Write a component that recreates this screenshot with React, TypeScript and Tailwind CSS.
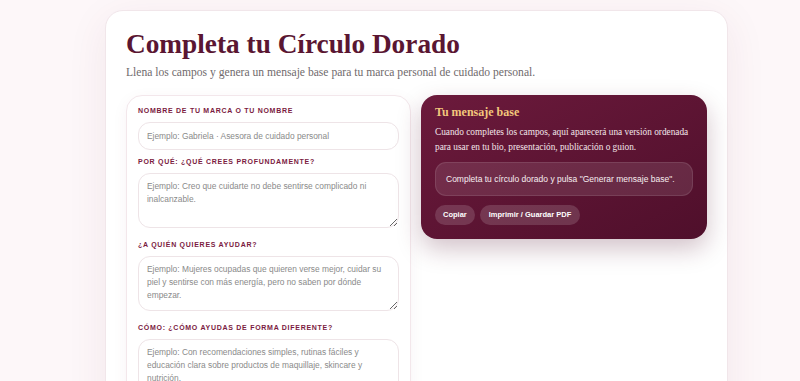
export default function App() {
    const serif = { fontFamily: '"Liberation Serif", "DejaVu Serif", serif' };

    const fields = [
        { label: 'Nombre de tu marca o tu nombre', placeholder: 'Ejemplo: Gabriela · Asesora de cuidado personal', area: false, mb: 'mb-[7px]' },
        { label: 'Por qué: ¿Qué crees profundamente?', placeholder: 'Ejemplo: Creo que cuidarte no debe sentirse complicado ni\ninalcanzable.', area: true, mb: 'mb-[12px]' },
        { label: '¿A quién quieres ayudar?', placeholder: 'Ejemplo: Mujeres ocupadas que quieren verse mejor, cuidar su\npiel y sentirse con más energía, pero no saben por dónde\nempezar.', area: true, mb: 'mb-[12px]' },
        { label: 'Cómo: ¿Cómo ayudas de forma diferente?', placeholder: 'Ejemplo: Con recomendaciones simples, rutinas fáciles y\neducación clara sobre productos de maquillaje, skincare y\nnutrición.', area: true, mb: 'mb-[12px]' },
    ];

    return (
        <div className="h-[381px] overflow-hidden bg-[#fdf7f9] pt-[10px]" style={{ fontFamily: '"Liberation Sans", Arial, sans-serif' }}>
            <div className="ml-[105px] w-[623px] rounded-[18px] bg-white border border-[#f1e6ea] shadow-[0_10px_40px_rgba(120,40,70,0.08)] px-[20px] pt-[16px] pb-6">
                <h1 className="text-[27.3px] leading-[34px] font-bold text-[#5a1632]" style={serif}>
                    Completa tu Círculo Dorado
                </h1>
                <p className="mt-[4px] text-[11.6px] leading-[16px] text-[#6f6a6c]" style={serif}>
                    Llena los campos y genera un mensaje base para tu marca personal de cuidado personal.
                </p>

                <div className="mt-[14px] flex gap-[10px] items-start">
                    {/* FORM */}
                    <div className="w-[286px] rounded-[16px] border border-[#f3e7eb] bg-white px-[11px] pt-[10px] pb-4 shadow-[0_4px_16px_rgba(120,40,70,0.05)]">
                        {fields.map(f => (
                            <div key={f.label} className={f.mb}>
                                <label className="block text-[7px] leading-[10px] font-bold uppercase tracking-[0.72px] text-[#7b1b3f] mb-[6px]">
                                    {f.label}
                                </label>
                                {f.area ? (
                                    <textarea
                                        className="block w-full h-[55px] rounded-[12px] border border-[#eee4e7] pl-[8px] pr-[2px] py-[6px] text-[8.4px] leading-[13px] text-[#333] placeholder:text-[#8a8a8a] outline-none resize-y"
                                        placeholder={f.placeholder}
                                    />
                                ) : (
                                    <input
                                        className="block w-full h-[28px] rounded-[12px] border border-[#eee4e7] px-[8px] text-[8.4px] text-[#333] placeholder:text-[#8a8a8a] outline-none"
                                        placeholder={f.placeholder}
                                    />
                                )}
                            </div>
                        ))}
                    </div>

                    {/* MESSAGE */}
                    <div className="w-[287px] rounded-[16px] bg-gradient-to-br from-[#6c1a3c] to-[#4f0f2b] px-[14px] pt-[9px] pb-[14px] shadow-[0_10px_24px_rgba(80,15,45,0.25)]">
                        <h2 className="text-[12px] leading-[16px] font-bold text-[#f2c77c]" style={serif}>Tu mensaje base</h2>
                        <p className="mt-[5px] text-[9.3px] leading-[15px] text-[#f3e6ea]" style={serif}>
                            Cuando completes los campos, aquí aparecerá una versión ordenada para usar en tu bio, presentación, publicación o guion.
                        </p>
                        <div className="mt-[7px] h-[34px] flex items-center rounded-[11px] bg-white/10 border border-white/10 px-[10px] text-[8.5px] text-[#f7eef1]">
                            Completa tu círculo dorado y pulsa "Generar mensaje base".
                        </div>
                        <div className="mt-[9px] flex gap-[5px]">
                            <button className="h-[20px] rounded-full bg-white/15 px-[8px] text-[7.5px] font-bold text-white">Copiar</button>
                            <button className="h-[20px] rounded-full bg-white/15 px-[9px] text-[7.5px] font-bold text-white">Imprimir / Guardar PDF</button>
                        </div>
                    </div>
                </div>
            </div>
        </div>
    );
}
